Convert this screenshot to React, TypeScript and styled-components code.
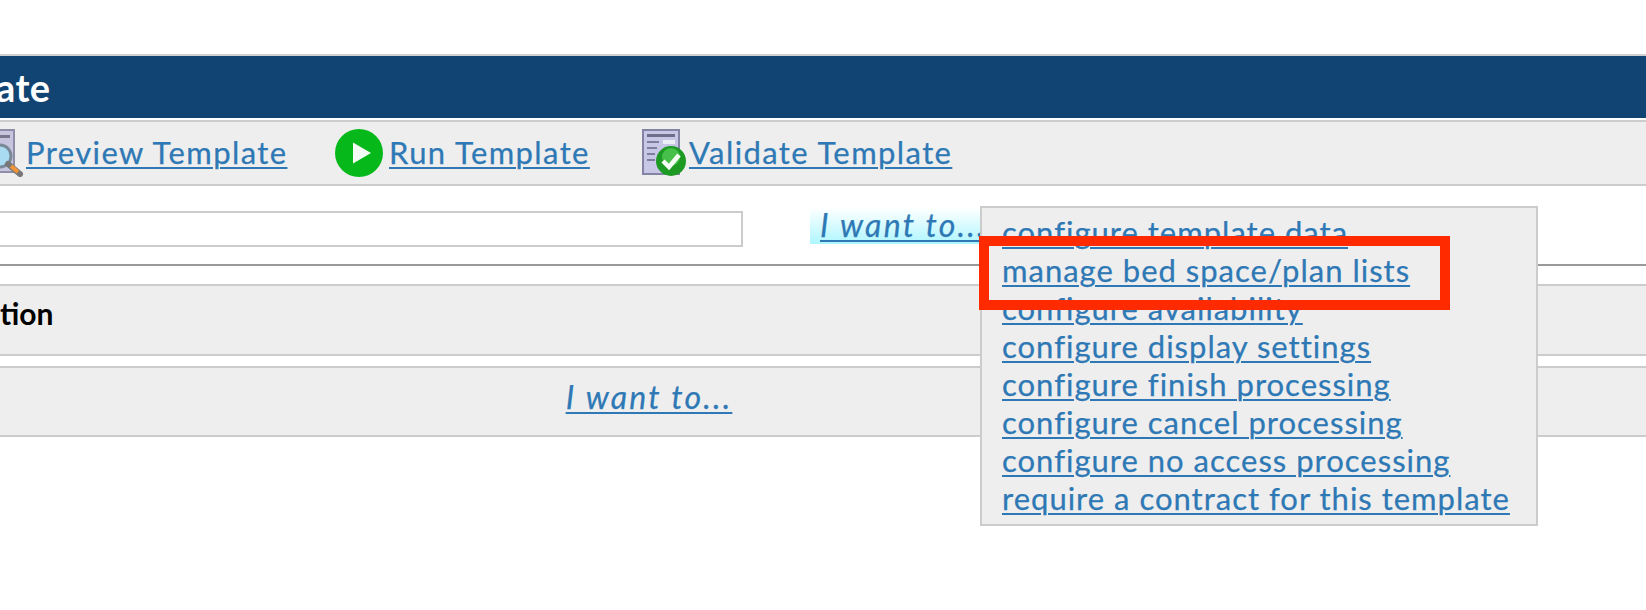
import styled, { createGlobalStyle } from 'styled-components';

const linkColor = '#2e79b5';
const panelColor = '#eeeeee';
const borderColor = '#cccccc';

const GlobalStyle = createGlobalStyle`
  html, body {
    margin: 0;
    padding: 0;
    background: #fff;
    overflow: hidden;
  }
  body {
    width: 1646px;
    height: 610px;
    font-family: Lato, "Open Sans", sans-serif;
    font-size: 31px;
  }
`;

/* the screenshot is a crop, the sheet runs past the left edge */
const Sheet = styled.div`
  width: 1994px;
  margin: 54px 0 0 -348px;
`;

const TitleBar = styled.div`
  height: 62px;
  padding-left: 344px;
  display: flex;
  align-items: center;
  border-top: 2px solid #d0d0d0;
  background: #114473;
  color: #fff;
  font-size: 38px;
  font-weight: 700;
  letter-spacing: 0.4px;
`;

const Toolbar = styled.div`
  height: 62px;
  margin-top: 2px;
  padding-left: 328px;
  display: flex;
  align-items: center;
  border-top: 2px solid ${borderColor};
  border-bottom: 2px solid ${borderColor};
  background: ${panelColor};
`;

const ToolItem = styled.div<{ $width: number; $gap: number }>`
  width: ${(p) => p.$width}px;
  display: flex;
  align-items: center;
  gap: ${(p) => p.$gap}px;
`;

const Link = styled.a<{ $italic?: boolean }>`
  color: ${linkColor};
  font-size: ${(p) => (p.$italic ? 32 : 31)}px;
  font-style: ${(p) => (p.$italic ? 'italic' : 'normal')};
  letter-spacing: ${(p) => (p.$italic ? 2.2 : 1.4)}px;
  line-height: 38px;
  -webkit-text-stroke: 0.25px ${linkColor};
  text-decoration: underline;
  text-decoration-thickness: 2px;
  text-underline-offset: 3px;
  white-space: nowrap;
  cursor: pointer;
`;

const ToolLink = styled(Link)`
  margin-top: -2px;
`;

const FormRow = styled.div`
  height: 80px;
  padding: 25px 0 0 300px;
  box-sizing: border-box;
  display: flex;
  align-items: flex-start;
  border-bottom: 2px solid #999999;
`;

const TextInput = styled.input`
  width: 791px;
  height: 36px;
  box-sizing: border-box;
  padding: 0 8px;
  border: 2px solid ${borderColor};
  background: #fff;
`;

const Trigger = styled.div`
  position: relative;
  margin: -3px 0 0 67px;
  height: 36px;
  width: 170px;
  padding-left: 10px;
  box-sizing: border-box;
  background: linear-gradient(#ffffff, #aef6ff);
`;

const TriggerLabel = styled(Link)`
  display: block;
  margin-top: -2px;
`;

const Menu = styled.div`
  position: absolute;
  left: 170px;
  top: -2px;
  width: 558px;
  height: 320px;
  box-sizing: border-box;
  padding: 5px 0 0 20px;
  display: flex;
  flex-direction: column;
  border: 2px solid ${borderColor};
  background: ${panelColor};
`;

const MenuLink = styled(Link)`
  letter-spacing: 1px;
`;

const Callout = styled.div`
  position: absolute;
  left: -3px;
  top: 28px;
  width: 471px;
  height: 74px;
  box-sizing: border-box;
  border: 10px solid #ff2a00;
`;

const SectionRow = styled.div`
  height: 54px;
  margin-top: 18px;
  padding: 0 0 14px 348px;
  display: flex;
  align-items: center;
  border-top: 2px solid ${borderColor};
  border-bottom: 2px solid ${borderColor};
  background: ${panelColor};
`;

const SectionTitle = styled.span`
  font-size: 30px;
  font-weight: 700;
  color: #000;
`;

const ActionRow = styled.div`
  height: 58px;
  margin-top: 10px;
  padding-bottom: 9px;
  display: flex;
  align-items: center;
  justify-content: center;
  border-top: 2px solid ${borderColor};
  border-bottom: 2px solid ${borderColor};
  background: ${panelColor};
`;

const menuItems = [
  'configure template data',
  'manage bed space/plan lists',
  'configure availability',
  'configure display settings',
  'configure finish processing',
  'configure cancel processing',
  'configure no access processing',
  'require a contract for this template',
];

const PreviewIcon = () => (
  <svg width="44" height="48" viewBox="0 0 44 48">
    <rect x="2" y="1" width="32" height="42" fill="#c6c4de" stroke="#8f8ea6" strokeWidth="2" />
    <rect x="6" y="6" width="24" height="3" fill="#77768c" />
    <rect x="6" y="13" width="10" height="2" fill="#8e8da8" />
    <circle cx="20" cy="27" r="11" fill="#a9dcf2" stroke="#7a8a98" strokeWidth="3" />
    <path d="M28 35 L40 45" stroke="#777" strokeWidth="6" strokeLinecap="round" />
    <path d="M31 37 L38 43" stroke="#f0953a" strokeWidth="4" />
  </svg>
);

const PlayIcon = () => (
  <svg width="48" height="48" viewBox="0 0 48 48">
    <circle cx="24" cy="24" r="24" fill="#06b81a" />
    <path d="M18 13.500 L36 24 L18 34.500 Z" fill="#f4fbf4" />
  </svg>
);

const ValidateIcon = () => (
  <svg width="46" height="48" viewBox="0 0 46 48">
    <rect x="2" y="1" width="36" height="44" fill="#c9c7e6" stroke="#8583a3" strokeWidth="2" />
    <rect x="6" y="5" width="28" height="3" fill="#6f6e88" />
    <rect x="6" y="12" width="12" height="2" fill="#7f7e9c" />
    <rect x="22" y="11" width="12" height="4" fill="#eeeef6" />
    <rect x="6" y="18" width="10" height="2" fill="#7f7e9c" />
    <rect x="6" y="24" width="8" height="2" fill="#7f7e9c" />
    <rect x="6" y="30" width="8" height="2" fill="#7f7e9c" />
    <circle cx="30" cy="32" r="15" fill="#1c9a24" />
    <circle cx="30" cy="28" r="9" fill="#47c04a" />
    <path d="M22 32 L28 38 L38 26" fill="none" stroke="#f6fff6" strokeWidth="4.500" />
  </svg>
);

export default function App() {
  return (
    <>
      <GlobalStyle />
      <Sheet>
        <TitleBar>ate</TitleBar>
        <Toolbar>
          <ToolItem $width={355} $gap={2}>
            <PreviewIcon />
            <ToolLink>Preview Template</ToolLink>
          </ToolItem>
          <ToolItem $width={306} $gap={6}>
            <PlayIcon />
            <ToolLink>Run Template</ToolLink>
          </ToolItem>
          <ToolItem $width={340} $gap={2}>
            <ValidateIcon />
            <ToolLink>Validate Template</ToolLink>
          </ToolItem>
        </Toolbar>
        <FormRow>
          <TextInput />
          <Trigger>
            <TriggerLabel $italic>I want to...</TriggerLabel>
            <Menu>
              {menuItems.map((item) => (
                <div key={item}>
                  <MenuLink>{item}</MenuLink>
                </div>
              ))}
              <Callout />
            </Menu>
          </Trigger>
        </FormRow>
        <SectionRow>
          <SectionTitle>tion</SectionTitle>
        </SectionRow>
        <ActionRow>
          <Link $italic>I want to...</Link>
        </ActionRow>
      </Sheet>
    </>
  );
}
